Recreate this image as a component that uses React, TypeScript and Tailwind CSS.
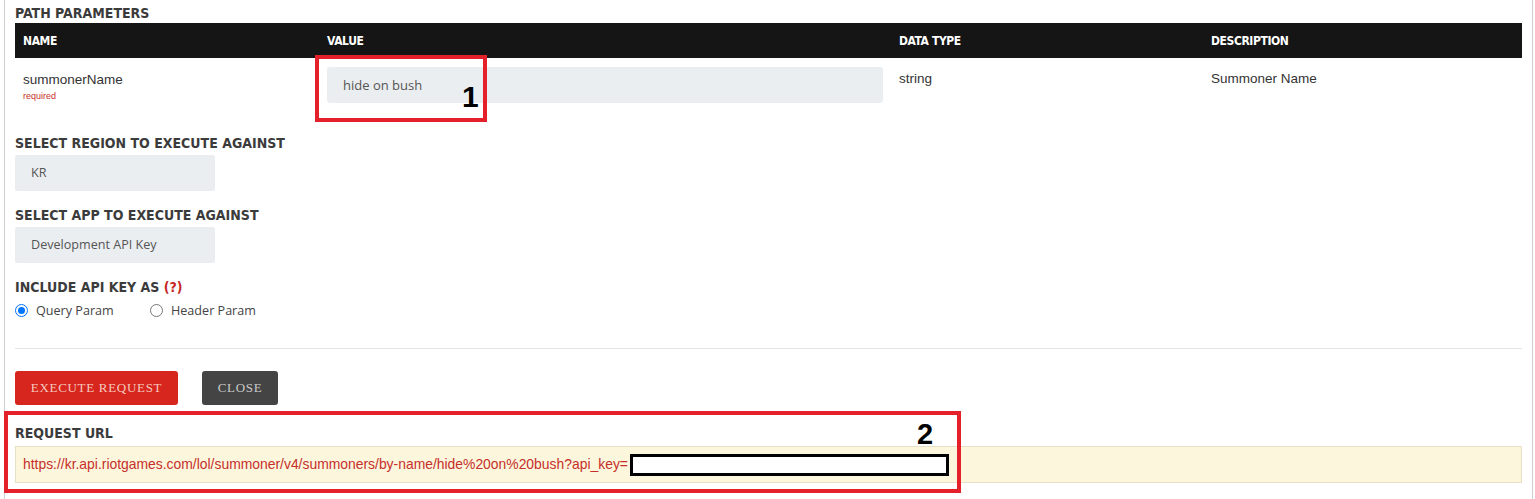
import React from "react";

const heading = "font-['DejaVu_Sans_Condensed','DejaVu_Sans',sans-serif] font-bold text-[14px] leading-[20px] text-[#3b3b3b] uppercase";
const body = "font-['Open_Sans',sans-serif] text-[12.6px] text-[#444]";

function Radio({ checked }: { checked?: boolean }) {
  return checked ? (
    <span className="w-[13px] h-[13px] rounded-full border-[1.5px] border-[#0075ff] flex items-center justify-center bg-white">
      <span className="w-[7px] h-[7px] rounded-full bg-[#0075ff]" />
    </span>
  ) : (
    <span className="w-[13px] h-[13px] rounded-full border border-[#767676] bg-white" />
  );
}

export default function App() {
  return (
    <div className="relative w-[1535px] h-[499px] bg-white overflow-hidden">
      <div className="ml-[4px] w-[1529px] h-[499px] border-l border-r border-[#cfcfcf] px-[10px]">
        <div className={`${heading} h-[23px] pt-[3px]`}>Path Parameters</div>

        <div className="grid grid-cols-[304px_572px_312px_319px]">
          {["NAME", "VALUE", "DATA TYPE", "DESCRIPTION"].map((h) => (
            <div
              key={h}
              className="h-[35px] bg-[#151515] flex items-center px-[8px] font-['DejaVu_Sans_Condensed','DejaVu_Sans',sans-serif] font-bold text-[12px] text-white tracking-[-0.4px]"
            >
              {h}
            </div>
          ))}

          <div className="h-[75px] px-[8px] pt-[13px]">
            <div className="font-['Liberation_Sans',Arial,sans-serif] text-[13.5px] leading-[18px] text-[#333]">summonerName</div>
            <div className="font-['Liberation_Sans',Arial,sans-serif] text-[9px] leading-[12px] mt-[1px] text-[#c9302c]">required</div>
          </div>
          <div className="h-[75px] px-[8px] pt-[9px]">
            <div className={`h-[36px] rounded-[3px] bg-[#ebeef0] flex items-center px-[16px] pt-[2px] ${body} text-[13px] text-[#555]`}>hide on bush</div>
          </div>
          <div className="h-[75px] px-[8px] pt-[12px]">
            <div className="font-['Liberation_Sans',Arial,sans-serif] text-[13.5px] leading-[18px] text-[#333]">string</div>
          </div>
          <div className="h-[75px] px-[8px] pt-[12px]">
            <div className="font-['Liberation_Sans',Arial,sans-serif] text-[13.5px] leading-[18px] text-[#333]">Summoner Name</div>
          </div>
        </div>

        <div className={heading}>Select Region to Execute Against</div>
        <div className={`mt-[2px] w-[200px] h-[36px] rounded-[2px] bg-[#ebeef0] flex items-center px-[16px] ${body} text-[#555]`}>KR</div>

        <div className={`${heading} mt-[14px]`}>Select App to Execute Against</div>
        <div className={`mt-[2px] w-[200px] h-[36px] rounded-[2px] bg-[#ebeef0] flex items-center px-[16px] ${body} text-[#555]`}>Development API Key</div>

        <div className={`${heading} mt-[14px]`}>
          Include API Key As <span className="text-[#c62828]">(?)</span>
        </div>
        <div className={`mt-[4px] h-[20px] flex items-center ${body} text-[#333]`}>
          <div className="flex items-center gap-[8px] w-[135px]">
            <Radio checked />
            <span>Query Param</span>
          </div>
          <div className="flex items-center gap-[8px]">
            <Radio />
            <span>Header Param</span>
          </div>
        </div>

        <div className="mt-[27px] h-px bg-[#e3e3e3]" />

        <div className="mt-[22px] flex gap-[24px]">
          <button className="w-[163px] h-[34px] rounded-[3px] bg-[#d7261e] text-[#f6c9bf] font-['Liberation_Serif',serif] text-[13px] tracking-[0.7px] uppercase">
            Execute Request
          </button>
          <button className="w-[76px] h-[34px] rounded-[3px] bg-[#444444] text-[#c9c9c9] font-['Liberation_Serif',serif] text-[13px] tracking-[0.7px] uppercase">
            Close
          </button>
        </div>

        <div className={`${heading} mt-[18px]`}>Request URL</div>
        <div className="mt-[3px] h-[37px] bg-[#fcf6dd] border border-[#e7e0c6] flex items-center px-[7px] font-['Liberation_Sans',Arial,sans-serif] text-[13.9px] text-[#c62f2a] whitespace-nowrap">
          <span>https://kr.api.riotgames.com/lol/summoner/v4/summoners/by-name/hide%20on%20bush?api_key=</span>
          <span className="inline-block w-[319px] h-[22px] border-[3px] border-black bg-white ml-[2px]" />
        </div>
      </div>

      {/* annotations */}
      <div className="absolute left-[315px] top-[55px] w-[172px] h-[67px] border-[4px] border-[#e4202b]" />
      <div className="absolute left-[462px] top-[80px] font-['Liberation_Sans',Arial,sans-serif] font-bold text-[30px] leading-[34px] text-black">1</div>
      <div className="absolute left-[4px] top-[411px] w-[957px] h-[82px] border-[4px] border-[#e4202b]" />
      <div className="absolute left-[917px] top-[418px] font-['Liberation_Sans',Arial,sans-serif] font-bold text-[29px] leading-[32px] text-black">2</div>
    </div>
  );
}
